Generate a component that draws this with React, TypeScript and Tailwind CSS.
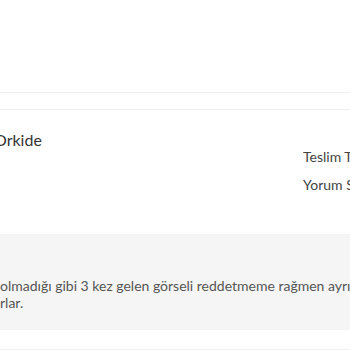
export default function App() {
    return (
        <div className="w-[350px] h-[350px] overflow-hidden bg-white font-['Lato',sans-serif]">
            {/* top empty area */}
            <div className="h-[92px]" />

            {/* thin band between borders */}
            <div className="h-[18px] border-y border-[#efefef]" />

            {/* product row */}
            <div className="flex h-[124px]">
                <div className="flex-1 pt-[18px] -ml-[6px]">
                    <p className="text-[16px] leading-[24px] text-[#333]">Orkide</p>
                </div>
                <div className="w-[47px] shrink-0 overflow-hidden whitespace-nowrap pt-[37px] text-[14px] text-[#444]">
                    <p className="leading-[20px]">Teslim Tarihi</p>
                    <p className="mt-[8px] leading-[20px]">Yorum Sayısı</p>
                </div>
            </div>

            {/* review comment box */}
            <div className="h-[96px] bg-[#f5f5f5] pt-[43px] overflow-hidden whitespace-nowrap text-[14px] leading-[17px] text-[#555]">
                <p>olmadığı gibi 3 kez gelen görseli reddetmeme rağmen ayrı ayrı gönderdiler</p>
                <p>rlar.</p>
            </div>

            <div className="h-[20px] border-b border-[#efefef]" />
        </div>
    );
}
